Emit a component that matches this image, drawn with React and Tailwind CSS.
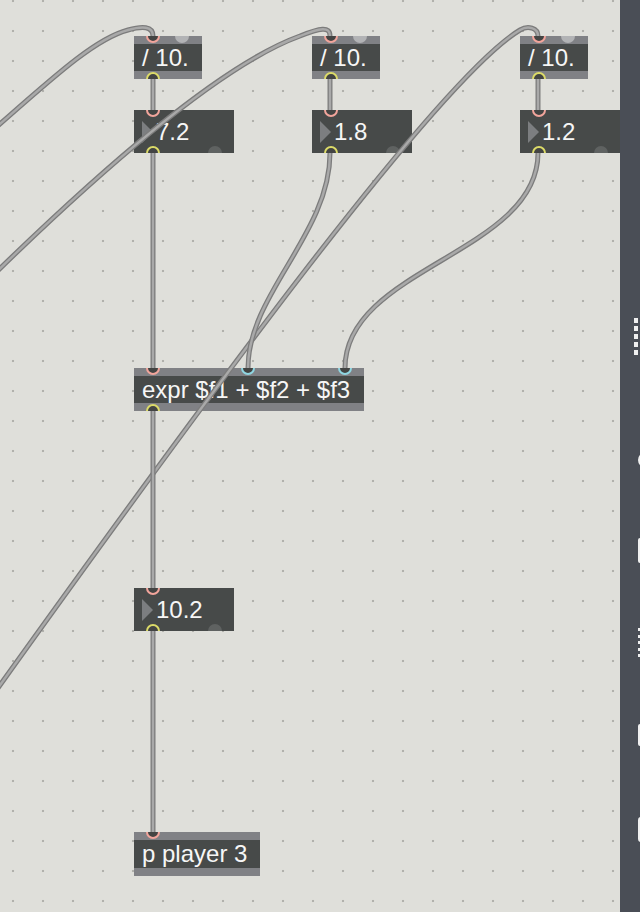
import React from "react";

const font = "font-['Liberation_Sans',Arial,sans-serif]";

// port ring sitting on the box edge (box clips the outer half)
const Port = ({ className }) => (
  <span
    className={
      "absolute w-[14px] h-[14px] rounded-full border-2 bg-[#434443] " +
      className
    }
  />
);

const ObjectBox = ({ className, text, children }) => (
  <div className={"absolute overflow-hidden flex flex-col " + className}>
    <div className="h-[8px] bg-[#808185]" />
    <div
      className={
        "flex-1 flex items-center pl-2 bg-[#474a49] text-[24px] leading-none text-[#f6f6f6] whitespace-nowrap " +
        font
      }
    >
      {text}
    </div>
    <div className="h-[8px] bg-[#808185]" />
    {children}
  </div>
);

const NumberBox = ({ className, value }) => (
  <div
    className={
      "absolute overflow-hidden h-[43px] w-[100px] flex items-center pl-2 bg-[#474a49] " +
      className
    }
  >
    <span className="w-0 h-0 border-y-[11.5px] border-y-transparent border-l-[11px] border-l-[#7c7e80]" />
    <span
      className={"ml-[3px] text-[24px] leading-none text-[#f6f6f6] " + font}
    >
      {value}
    </span>
    <Port className="left-[12px] -top-[7px] border-[#f2a59c]" />
    <Port className="left-[12px] -bottom-[7px] border-[#dcdb68]" />
    <span className="absolute left-[74px] -bottom-[7px] w-[14px] h-[14px] rounded-full bg-[#5f6261]" />
  </div>
);

const DivBox = ({ className }) => (
  <ObjectBox className={"h-[43px] w-[68px] " + className} text="/ 10.">
    <Port className="left-[12px] -top-[7px] border-[#f2a59c]" />
    <span className="absolute left-[41px] -top-[7px] w-[14px] h-[14px] rounded-full bg-[#b2b3b5]" />
    <Port className="left-[12px] -bottom-[7px] border-[#dcdb68]" />
  </ObjectBox>
);

const cords = [
  "M-30 150 C40 90 90 40 128 30 C142 26 153 26 153 36",
  "M-20 288 C100 170 220 65 300 36 C320 28 330 26 330 36",
  "M-40 741 C210 391 440 78 520 30 C528 25 538 28 538 36",
  "M153 79 L153 110",
  "M330 79 L330 110",
  "M538 79 L538 110",
  "M153 153 L153 368",
  "M330 153 C330 234 248 294 248 368",
  "M538 153 C538 253 345 268 345 368",
  "M153 411 L153 588",
  "M153 631 L153 832",
];

const Cords = () => (
  <svg
    className="absolute inset-0 pointer-events-none"
    width="620"
    height="912"
    viewBox="0 0 620 912"
    fill="none"
  >
    {cords.map((d, i) => (
      <g key={i}>
        <path d={d} stroke="#7c7c7c" strokeWidth="5" />
        <path d={d} stroke="#a9a9a9" strokeWidth="2.4" />
      </g>
    ))}
  </svg>
);

const Sidebar = () => (
  <div className="w-[20px] h-full bg-[#4a4e56] overflow-hidden flex flex-col items-start pt-[318px]">
    <div className="ml-[14px] flex flex-col gap-[3px]">
      <span className="w-[4px] h-[5px] bg-[#f0f0f0]" />
      <span className="w-[4px] h-[5px] bg-[#f0f0f0]" />
      <span className="w-[4px] h-[5px] bg-[#f0f0f0]" />
      <span className="w-[4px] h-[5px] bg-[#f0f0f0]" />
      <span className="w-[4px] h-[5px] bg-[#f0f0f0]" />
    </div>
    <span className="mt-[97px] ml-[18px] shrink-0 w-[16px] h-[16px] rounded-full border-2 border-[#f0f0f0]" />
    <span className="mt-[70px] ml-[18px] shrink-0 w-[14px] h-[25px] rounded-[2px] border-2 border-[#f0f0f0]" />
    <div className="mt-[65px] ml-[18px] flex flex-col gap-[3.5px]">
      <span className="w-[3px] h-[3px] bg-[#f0f0f0]" />
      <span className="w-[3px] h-[3px] bg-[#f0f0f0]" />
      <span className="w-[3px] h-[3px] bg-[#f0f0f0]" />
      <span className="w-[3px] h-[3px] bg-[#f0f0f0]" />
      <span className="w-[3px] h-[3px] bg-[#f0f0f0]" />
    </div>
    <span className="mt-[67px] ml-[18px] shrink-0 w-[14px] h-[22px] rounded-[2px] border-2 border-[#f0f0f0]" />
    <span className="mt-[71px] ml-[18px] shrink-0 w-[14px] h-[25px] rounded-[3px] border-2 border-[#f0f0f0]" />
  </div>
);

export default function App() {
  return (
    <div className="w-[640px] h-[912px] flex overflow-hidden bg-[#dfdfda]">
      {/* patcher canvas */}
      <div className="relative w-[620px] h-[912px] overflow-hidden bg-[#dfdfda] bg-[radial-gradient(circle,#b1b1ac_1px,transparent_1.6px)] bg-[length:30px_30px] bg-[position:-2px_-14px]">
        <DivBox className="left-[134px] top-[36px]" />
        <DivBox className="left-[312px] top-[36px]" />
        <DivBox className="left-[520px] top-[36px]" />

        <NumberBox className="left-[134px] top-[110px]" value="7.2" />
        <NumberBox className="left-[312px] top-[110px]" value="1.8" />
        <NumberBox className="left-[520px] top-[110px]" value="1.2" />

        <ObjectBox
          className="left-[134px] top-[368px] h-[43px] w-[230px]"
          text="expr $f1 + $f2 + $f3"
        >
          <Port className="left-[12px] -top-[7px] border-[#f2a59c]" />
          <Port className="left-[107px] -top-[7px] border-[#8fd6e2]" />
          <Port className="left-[204px] -top-[7px] border-[#8fd6e2]" />
          <Port className="left-[12px] -bottom-[7px] border-[#dcdb68]" />
        </ObjectBox>

        <NumberBox className="left-[134px] top-[588px]" value="10.2" />

        <ObjectBox
          className="left-[134px] top-[832px] h-[44px] w-[126px]"
          text="p player 3"
        >
          <Port className="left-[12px] -top-[7px] border-[#f2a59c]" />
        </ObjectBox>

        <Cords />
      </div>
      <Sidebar />
    </div>
  );
}
